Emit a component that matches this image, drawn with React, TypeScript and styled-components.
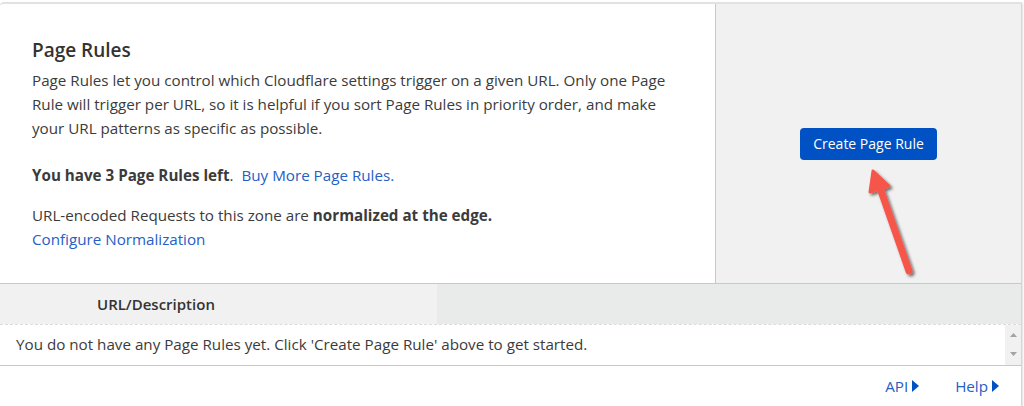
import React from 'react';
import styled, { createGlobalStyle } from 'styled-components';

const GlobalStyle = createGlobalStyle`
  html, body {
    margin: 0;
    padding: 0;
    background: #ffffff;
  }
  body {
    font-family: 'Open Sans', 'Noto Sans', sans-serif;
    color: #333333;
  }
`;

const Card = styled.div`
  position: relative;
  width: 1021px;
  margin-top: 2px;
  border-top: 2px solid #e2e2e2;
  border-right: 1px solid #d6d6d6;
  border-top-left-radius: 4px;
  box-shadow: 1px 1px 2px rgba(0, 0, 0, 0.12);
  background: #ffffff;
`;

const Top = styled.div`
  display: flex;
  height: 279px;
  border-bottom: 1px solid #c8c8c8;
`;

const Intro = styled.div`
  width: 683px;
  padding: 32px 0 0 32px;
  border-right: 1px solid #c9c9c9;
`;

const Title = styled.h2`
  margin: 0 0 4px;
  font-size: 19px;
  font-weight: 600;
  line-height: 28px;
  color: #333333;
`;

const Text = styled.p<{ $gap?: number }>`
  margin: 0 0 ${(p) => p.$gap ?? 0}px;
  font-size: 15.2px;
  line-height: 24px;
  color: #3b3b3b;
  max-width: 660px;
`;

const Link = styled.a`
  color: #2560c5;
  text-decoration: none;
`;

const Side = styled.div`
  flex: 1;
  display: flex;
  align-items: center;
  justify-content: center;
  background: #f1f1f1;
`;

const PrimaryButton = styled.button`
  width: 137px;
  height: 32px;
  border: none;
  border-radius: 4px;
  background: #0051c3;
  color: #ffffff;
  font-family: inherit;
  font-size: 14px;
  padding: 0;
`;

const HeadRow = styled.div`
  display: grid;
  grid-template-columns: 437px 1fr;
  height: 40px;
  border-bottom: 1px dashed #dcdcdc;
`;

const HeadCell = styled.div<{ $tone: string }>`
  display: flex;
  align-items: center;
  padding-left: 97px;
  padding-bottom: 1px;
  background: ${(p) => p.$tone};
  font-size: 15px;
  font-weight: 600;
  color: #333333;
`;

const BodyRow = styled.div`
  display: flex;
  height: 40px;
  border-bottom: 1px solid #c8c8c8;
`;

const EmptyText = styled.div`
  flex: 1;
  display: flex;
  align-items: center;
  padding-left: 16px;
  padding-bottom: 2px;
  font-size: 15.2px;
  color: #3b3b3b;
`;

const Scrollbar = styled.div`
  width: 16px;
  display: flex;
  flex-direction: column;
  justify-content: space-between;
  align-items: center;
  padding: 8px 0 9px;
  background: #f1f1f1;
`;

const Footer = styled.div`
  display: flex;
  justify-content: flex-end;
  align-items: center;
  gap: 36px;
  height: 40px;
  padding-right: 22px;
`;

const FooterLink = styled.a`
  display: flex;
  align-items: center;
  gap: 4px;
  color: #2560c5;
  font-size: 15.2px;
  text-decoration: none;
`;

const Arrow = styled.svg`
  position: absolute;
  left: 859px;
  top: 157px;
  overflow: visible;
`;

const Caret = () => (
  <svg width="7" height="12" viewBox="0 0 7 12">
    <path d="M0 0 L7 6 L0 12 Z" fill="#0051c3" />
  </svg>
);

const ScrollArrow = ({ up }: { up?: boolean }) => (
  <svg width="7" height="4" viewBox="0 0 7 4">
    <path d={up ? 'M0 4 L3.5 0 L7 4 Z' : 'M0 0 L3.5 4 L7 0 Z'} fill="#a3a3a3" />
  </svg>
);

const App = (): React.ReactElement => {
  return (
    <>
      <GlobalStyle />
      <Card>
        <Top>
          <Intro>
            <Title>Page Rules</Title>
            <Text $gap={23}>
              Page Rules let you control which Cloudflare settings trigger on a given URL. Only one Page
              Rule will trigger per URL, so it is helpful if you sort Page Rules in priority order, and make
              your URL patterns as specific as possible.
            </Text>
            <Text $gap={16}>
              <b>You have 3 Page Rules left</b>.&nbsp; <Link href="#">Buy More Page Rules.</Link>
            </Text>
            <Text>
              URL-encoded Requests to this zone are <b>normalized at the edge.</b>
              <br />
              <Link href="#">Configure Normalization</Link>
            </Text>
          </Intro>
          <Side>
            <PrimaryButton>Create Page Rule</PrimaryButton>
          </Side>
        </Top>
        <HeadRow>
          <HeadCell $tone="#f1f1f1">URL/Description</HeadCell>
          <HeadCell $tone="#e9eaea" />
        </HeadRow>
        <BodyRow>
          <EmptyText>You do not have any Page Rules yet. Click 'Create Page Rule' above to get started.</EmptyText>
          <Scrollbar>
            <ScrollArrow up />
            <ScrollArrow />
          </Scrollbar>
        </BodyRow>
        <Footer>
          <FooterLink href="#">API <Caret /></FooterLink>
          <FooterLink href="#">Help <Caret /></FooterLink>
        </Footer>
        {/* annotation arrow pointing at the button */}
        <Arrow width="70" height="120" viewBox="0 0 70 120">
          <defs>
            <filter id="shadow" x="-50%" y="-50%" width="200%" height="200%">
              <feDropShadow dx="2" dy="2" stdDeviation="1.5" floodColor="#000" floodOpacity="0.55" />
            </filter>
          </defs>
          <g filter="url(#shadow)">
            <line x1="50" y1="110" x2="20" y2="24" stroke="#f5574a" strokeWidth="7" strokeLinecap="round" />
            <path d="M14 10 L30 25 L11 31 Z" fill="#f5574a" stroke="#f5574a" strokeWidth="3" strokeLinejoin="round" />
          </g>
        </Arrow>
      </Card>
    </>
  );
};

export default App;
